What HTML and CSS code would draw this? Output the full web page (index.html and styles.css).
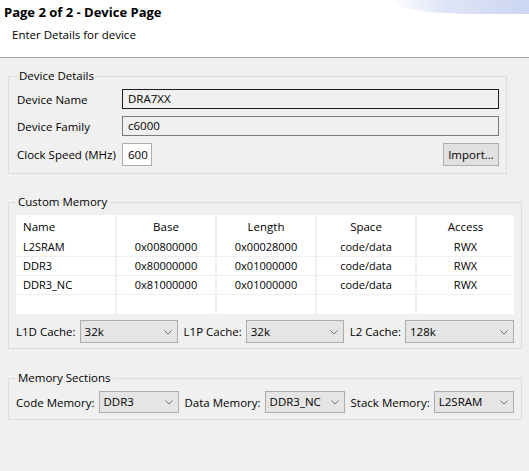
FILE: index.html
```html
<!DOCTYPE html>
<html lang="en">
<head>
    <meta charset="UTF-8">
    <title>Device Page</title>
    <link rel="stylesheet" href="styles.css">
</head>
<body>
    <div class="header">
        <div class="glow"></div>
        <div class="title">Page 2 of 2 - Device Page</div>
        <div class="subtitle">Enter Details for device</div>
    </div>

    <div class="content">
        <fieldset class="group details">
            <legend>Device Details</legend>
            <div class="row">
                <span class="label">Device Name</span>
                <div class="field focused">DRA7XX</div>
            </div>
            <div class="row">
                <span class="label">Device Family</span>
                <div class="field">c6000</div>
            </div>
            <div class="row">
                <span class="label">Clock Speed (MHz)</span>
                <div class="field small">600</div>
                <div class="button">Import...</div>
            </div>
        </fieldset>

        <fieldset class="group memory">
            <legend>Custom Memory</legend>
            <table class="grid">
                <colgroup>
                    <col class="c100"><col class="c100"><col class="c100"><col class="c100"><col>
                </colgroup>
                <tr class="head">
                    <th class="left">Name</th><th>Base</th><th>Length</th><th>Space</th><th>Access</th>
                </tr>
                <tr>
                    <td class="left">L2SRAM</td><td>0x00800000</td><td>0x00028000</td><td>code/data</td><td>RWX</td>
                </tr>
                <tr>
                    <td class="left">DDR3</td><td>0x80000000</td><td>0x01000000</td><td>code/data</td><td>RWX</td>
                </tr>
                <tr>
                    <td class="left">DDR3_NC</td><td>0x81000000</td><td>0x01000000</td><td>code/data</td><td>RWX</td>
                </tr>
                <tr class="blank">
                    <td></td><td></td><td></td><td></td><td></td>
                </tr>
            </table>
            <div class="combos cache">
                <span>L1D Cache:</span>
                <div class="combo w98">32k<svg viewBox="0 0 8 5"><path d="M0.5 0.5 L4 4 L7.5 0.5"/></svg></div>
                <span class="next">L1P Cache:</span>
                <div class="combo w98">32k<svg viewBox="0 0 8 5"><path d="M0.5 0.5 L4 4 L7.5 0.5"/></svg></div>
                <span class="next">L2 Cache:</span>
                <div class="combo grow">128k<svg viewBox="0 0 8 5"><path d="M0.5 0.5 L4 4 L7.5 0.5"/></svg></div>
            </div>
        </fieldset>

        <fieldset class="group sections">
            <legend>Memory Sections</legend>
            <div class="combos">
                <span>Code Memory:</span>
                <div class="combo w80">DDR3<svg viewBox="0 0 8 5"><path d="M0.5 0.5 L4 4 L7.5 0.5"/></svg></div>
                <span class="next">Data Memory:</span>
                <div class="combo w80">DDR3_NC<svg viewBox="0 0 8 5"><path d="M0.5 0.5 L4 4 L7.5 0.5"/></svg></div>
                <span class="next">Stack Memory:</span>
                <div class="combo grow">L2SRAM<svg viewBox="0 0 8 5"><path d="M0.5 0.5 L4 4 L7.5 0.5"/></svg></div>
            </div>
        </fieldset>
    </div>
</body>
</html>
```

FILE: styles.css
```css
body{
    margin: 0;
    background-color: #f0f0f0;
    font-family: "Open Sans", "Noto Sans", sans-serif;
    font-size: 11px;
    color: #000;
}

.header{
    position: relative;
    background-color: #fff;
    height: 57px;
    border-bottom: 1px solid #a0a0a0;
    overflow: hidden;
}

.glow{
    position: absolute;
    top: 0;
    right: 0;
    width: 140px;
    height: 14px;
    border-bottom-left-radius: 90px 14px;
    background: linear-gradient(to right, rgba(225,230,248,0), #dfe5f7 40%, #cdd6f2);
}

.title{
    font-weight: bold;
    font-size: 13px;
    padding: 3px 0 0 4px;
    line-height: 18px;
}

.subtitle{
    font-size: 11.5px;
    padding: 5px 0 0 12px;
    line-height: 18px;
}

.content{
    padding: 10px 7px 0 8px;
}

.group{
    margin: 0 0 20px 0;
    border: 1px solid #dcdcdc;
    padding: 5px 7px 7px 7px;
}

.group legend{
    padding: 0 2px;
    line-height: 16px;
    font-size: 11.5px;
}

.details{
    margin-right: 15px;
    padding-left: 8px;
}

.row{
    display: flex;
    align-items: center;
    margin-bottom: 7px;
    font-size: 11.5px;
}

.row:last-child{
    margin-bottom: 0;
}

.label{
    width: 105px;
}

.field{
    flex: 1;
    height: 18px;
    line-height: 18px;
    padding-left: 5px;
    border: 1px solid #7a7a7a;
    background-color: #f0f0f0;
}

.field.focused{
    border-color: #1e1e1e;
}

.field.small{
    flex: none;
    width: 23px;
    height: 21px;
    line-height: 21px;
    background-color: #fff;
    border-color: #adadad;
}

.button{
    margin-left: auto;
    width: 54px;
    height: 21px;
    line-height: 21px;
    text-align: center;
    background-color: #e1e1e1;
    border: 1px solid #adadad;
}

.memory{
    margin-bottom: 21px;
    padding-bottom: 5px;
}

.grid{
    width: 100%;
    border-collapse: collapse;
    background-color: #fff;
    table-layout: fixed;
}

.grid .c100{
    width: 100px;
}

.grid th, .grid td{
    font-weight: normal;
    text-align: center;
    padding: 0;
    height: 18px;
    line-height: 18px;
    border-left: 2px solid #f0f0f0;
    border-bottom: 1px solid #f0f0f0;
}

.grid th:first-child, .grid td:first-child{
    border-left: none;
}

.grid th{
    font-size: 11.5px;
    height: 23px;
    border-bottom: none;
}

.grid tr.blank td{
    border-bottom: none;
    height: 19px;
}

.grid .left{
    text-align: left;
    padding-left: 7px;
}

.combos{
    display: flex;
    align-items: center;
    font-size: 11.5px;
}

.cache{
    margin-top: 6px;
}

.combos .next{
    margin-left: 6px;
}

.combo{
    position: relative;
    margin-left: 4px;
    padding-left: 4px;
    background-color: #e5e5e5;
    border: 1px solid #acacac;
    box-sizing: border-box;
}

.cache .combo{
    height: 23px;
    line-height: 21px;
}

.sections .combo{
    height: 22px;
    line-height: 20px;
}

.sections{
    padding-bottom: 6px;
}

.combo svg{
    position: absolute;
    right: 5px;
    top: 50%;
    width: 8px;
    height: 5px;
    margin-top: -2px;
    fill: none;
    stroke: #707070;
    stroke-width: 1;
}

.w98{
    width: 98px;
}

.w80{
    width: 80px;
}

.grow{
    flex: 1;
}
```
